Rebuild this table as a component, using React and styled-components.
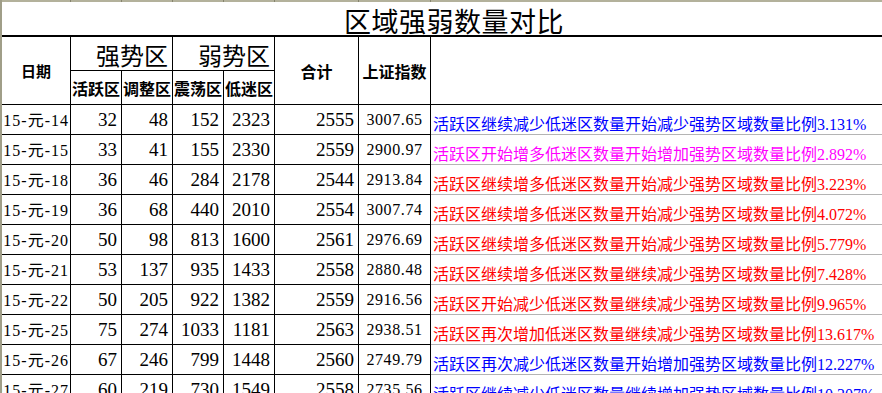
import React from "react";
import styled, { createGlobalStyle } from "styled-components";

const GlobalStyle = createGlobalStyle`
  html, body {
    margin: 0;
    padding: 0;
    background: #fff;
    overflow: hidden;
  }
  body {
    font-family: "Noto Sans Mono CJK SC", "Noto Sans CJK SC", sans-serif;
    color: #000;
  }
`;

const COLS = "69px 51px 51px 51px 51px 84px 72px 1fr";

const rows = [
  ["2015-元-14", 32, 48, 152, 2323, 2555, "3007.65", "blue", "活跃区继续减少低迷区数量开始减少强势区域数量比例3.131%"],
  ["2015-元-15", 33, 41, 155, 2330, 2559, "2900.97", "magenta", "活跃区开始增多低迷区数量开始增加强势区域数量比例2.892%"],
  ["2015-元-18", 36, 46, 284, 2178, 2544, "2913.84", "red", "活跃区继续增多低迷区数量开始减少强势区域数量比例3.223%"],
  ["2015-元-19", 36, 68, 440, 2010, 2554, "3007.74", "red", "活跃区继续增多低迷区数量开始减少强势区域数量比例4.072%"],
  ["2015-元-20", 50, 98, 813, 1600, 2561, "2976.69", "red", "活跃区继续增多低迷区数量开始减少强势区域数量比例5.779%"],
  ["2015-元-21", 53, 137, 935, 1433, 2558, "2880.48", "red", "活跃区继续增多低迷区数量继续减少强势区域数量比例7.428%"],
  ["2015-元-22", 50, 205, 922, 1382, 2559, "2916.56", "red", "活跃区开始减少低迷区数量继续减少强势区域数量比例9.965%"],
  ["2015-元-25", 75, 274, 1033, 1181, 2563, "2938.51", "red", "活跃区再次增加低迷区数量继续减少强势区域数量比例13.617%"],
  ["2015-元-26", 67, 246, 799, 1448, 2560, "2749.79", "blue", "活跃区再次减少低迷区数量开始增加强势区域数量比例12.227%"],
  ["2015-元-27", 60, 219, 730, 1549, 2558, "2735.56", "blue", "活跃区继续减少低迷区数量继续增加强势区域数量比例10.307%"],
];

const inks = { blue: "#0000ff", magenta: "#ff00ff", red: "#ff0000" };

const App = () => {
  return (
    <>
      <GlobalStyle />
      <Sheet>
        <ColumnStrip>
          {Array.from({ length: 8 }).map((_, i) => (
            <StripCell key={i} />
          ))}
        </ColumnStrip>
        <Grid>
          <Title>区域强弱数量对比</Title>

          <HeadCell $col="1" $row="2 / 4" $size={15}>日期</HeadCell>
          <ZoneCell $col="2 / 4">强势区</ZoneCell>
          <ZoneCell $col="4 / 6">弱势区</ZoneCell>
          <HeadCell $col="2" $row="3">活跃区</HeadCell>
          <HeadCell $col="3" $row="3">调整区</HeadCell>
          <HeadCell $col="4" $row="3">震荡区</HeadCell>
          <HeadCell $col="5" $row="3">低迷区</HeadCell>
          <HeadCell $col="6" $row="2 / 4">合计</HeadCell>
          <HeadCell $col="7" $row="2 / 4">上证指数</HeadCell>
          <BlankHead />

          {rows.map((r) => (
            <React.Fragment key={r[0]}>
              <DateCell>{r[0]}</DateCell>
              <NumCell>{r[1]}</NumCell>
              <NumCell>{r[2]}</NumCell>
              <NumCell>{r[3]}</NumCell>
              <NumCell>{r[4]}</NumCell>
              <NumCell>{r[5]}</NumCell>
              <PriceCell>{r[6]}</PriceCell>
              <NoteCell $ink={inks[r[7]]}>{r[8]}</NoteCell>
            </React.Fragment>
          ))}
        </Grid>
      </Sheet>
    </>
  );
};

const Sheet = styled.div`
  width: 882px;
  height: 393px;
  overflow: hidden;
  box-sizing: border-box;
  border-left: 2px solid #a09e88;
`;

const ColumnStrip = styled.div`
  display: grid;
  grid-template-columns: ${COLS};
  height: 2px;
  background: #b3b19b;
`;

const StripCell = styled.div`
  border-right: 1px solid #85836d;
  &:last-child {
    border-right: none;
  }
`;

const Grid = styled.div`
  display: grid;
  grid-template-columns: ${COLS};
  grid-template-rows: 35px 34px 34px repeat(10, 30px);
`;

const Title = styled.div`
  grid-column: 1 / -1;
  box-sizing: border-box;
  display: flex;
  align-items: flex-end;
  justify-content: center;
  padding: 0 0 1px 24px;
  border-bottom: 2px solid #000;
  font-size: 27px;
  line-height: 1;
  letter-spacing: 0.5px;
`;

const Cell = styled.div`
  box-sizing: border-box;
  display: flex;
  overflow: hidden;
  white-space: nowrap;
  line-height: 1;
  border-right: 1px solid #000;
  border-bottom: 1px solid #000;
`;

const HeadCell = styled(Cell)`
  grid-column: ${(p) => p.$col};
  grid-row: ${(p) => p.$row};
  align-items: center;
  justify-content: center;
  font-size: ${(p) => p.$size || 16}px;
  font-weight: 700;
`;

const ZoneCell = styled(Cell)`
  grid-column: ${(p) => p.$col};
  grid-row: 2;
  align-items: center;
  justify-content: flex-end;
  padding: 3px 4px 0 0;
  font-size: 24px;
`;

const BlankHead = styled(Cell)`
  grid-column: 8;
  grid-row: 2 / 4;
  border-right: none;
`;

const DataCell = styled(Cell)`
  align-items: flex-end;
  font-family: "Liberation Serif", "Noto Sans CJK SC", serif;
`;

const DateCell = styled(DataCell)`
  justify-content: flex-end;
  padding: 0 1px 5px 0;
  font-size: 16px;
  letter-spacing: 1px;
`;

const NumCell = styled(DataCell)`
  justify-content: flex-end;
  padding: 0 4px 5px 0;
  font-size: 19px;
`;

const PriceCell = styled(DataCell)`
  justify-content: center;
  padding-bottom: 6px;
  font-size: 16px;
  letter-spacing: 0.6px;
`;

const NoteCell = styled(DataCell)`
  padding: 0 0 1px 2px;
  border-right: none;
  border-bottom-color: #b4b4b4;
  font-size: 16px;
  color: ${(p) => p.$ink};
`;

export default App;
